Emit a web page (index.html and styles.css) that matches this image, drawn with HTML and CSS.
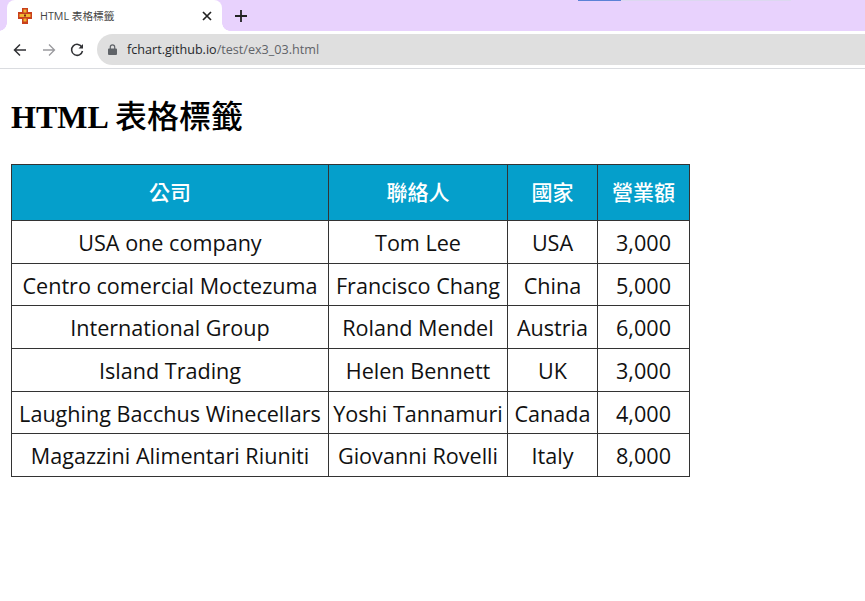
FILE: index.html
```html
<!DOCTYPE html>
<html lang="zh-Hant">
<head>
<meta charset="utf-8">
<title>HTML 表格標籤</title>
<link rel="stylesheet" href="styles.css">
</head>
<body>
<header class="chrome">
  <div class="tabstrip">
    <div class="tab">
      <svg class="favicon" width="14" height="16" viewBox="0 0 14 16"><path fill="#c9401c" d="M4 0h6v4h4v7h-4v5H4v-5H0V4h4z"/><path fill="#f2b632" d="M5.500 1.500h3v3h-3zM1.500 6h11v3h-11zM5.500 10.500h3v3h-3z"/><path fill="#7a2a10" d="M6 6.500h2v2H6z"/></svg>
      <span class="tab-title">HTML 表格標籤</span>
      <svg class="tab-close" width="10" height="10" viewBox="0 0 10 10"><path d="M1 1l8 8M9 1l-8 8" stroke="#222" stroke-width="1.700"/></svg>
    </div>
    <svg class="new-tab" width="12" height="12" viewBox="0 0 12 12"><path d="M6 0v12M0 6h12" stroke="#222" stroke-width="1.800"/></svg>
    <div class="sysbar"><span class="sysbar-blue"></span><span class="sysbar-light"></span></div>
  </div>
  <div class="toolbar">
    <svg class="nav" width="14" height="14" viewBox="0 0 14 14"><path d="M13 7H2M7 1.500L1.500 7 7 12.500" fill="none" stroke="#303134" stroke-width="1.500"/></svg>
    <svg class="nav" width="14" height="14" viewBox="0 0 14 14"><path d="M1 7h11M7 1.500L12.500 7 7 12.500" fill="none" stroke="#9a9a9e" stroke-width="1.300"/></svg>
    <svg class="nav nav-last" width="14" height="14" viewBox="0 0 14 14"><path d="M12 4.300A5.500 5.500 0 1 0 12.500 8" fill="none" stroke="#303134" stroke-width="1.500"/><path d="M13 1v4.500H8.500z" fill="#303134"/></svg>
    <div class="omnibox">
      <svg width="9" height="11" viewBox="0 0 9 11"><path fill="#5f6368" d="M1 4.500h7a1 1 0 0 1 1 1V10a1 1 0 0 1-1 1H1a1 1 0 0 1-1-1V5.500a1 1 0 0 1 1-1z"/><path fill="none" stroke="#5f6368" stroke-width="1.200" d="M2.300 5V3a2.200 2.200 0 0 1 4.400 0v2"/></svg>
      <span class="url"><span class="host">fchart.github.io</span>/test/ex3_03.html</span>
    </div>
  </div>
</header>
<main class="page">
  <h1>HTML <span class="h1-cjk">表格標籤</span></h1>
  <table class="sales">
    <colgroup><col class="c1"><col class="c2"><col class="c3"><col class="c4"></colgroup>
    <thead>
      <tr><th>公司</th><th>聯絡人</th><th>國家</th><th>營業額</th></tr>
    </thead>
    <tbody>
      <tr><td>USA one company</td><td>Tom Lee</td><td>USA</td><td>3,000</td></tr>
      <tr><td>Centro comercial Moctezuma</td><td>Francisco Chang</td><td>China</td><td>5,000</td></tr>
      <tr><td>International Group</td><td>Roland Mendel</td><td>Austria</td><td>6,000</td></tr>
      <tr><td>Island Trading</td><td>Helen Bennett</td><td>UK</td><td>3,000</td></tr>
      <tr><td>Laughing Bacchus Winecellars</td><td>Yoshi Tannamuri</td><td>Canada</td><td>4,000</td></tr>
      <tr><td>Magazzini Alimentari Riuniti</td><td>Giovanni Rovelli</td><td>Italy</td><td>8,000</td></tr>
    </tbody>
  </table>
</main>
</body>
</html>
```

FILE: styles.css
```css
html, body {
  margin: 0;
  padding: 0;
  background: #fff;
  overflow: hidden;
}
body {
  width: 865px;
  height: 601px;
  font-family: "Open Sans", "Noto Sans CJK TC", sans-serif;
}
.chrome {
  display: flex;
  flex-direction: column;
}
.tabstrip {
  position: relative;
  height: 31px;
  background: #e8d2fd;
  display: flex;
  align-items: center;
  padding-left: 7px;
  box-sizing: border-box;
}
.tab {
  position: relative;
  width: 215px;
  height: 31px;
  box-sizing: border-box;
  background: #fff;
  border-radius: 8px 8px 0 0;
  display: flex;
  align-items: center;
  padding: 0 10px 0 11px;
}
.tab::before, .tab::after {
  content: "";
  position: absolute;
  bottom: 0;
  width: 8px;
  height: 8px;
}
.tab::before {
  left: -8px;
  background: radial-gradient(circle at 0 0, #e8d2fd 7.500px, #fff 8px);
}
.tab::after {
  right: -8px;
  background: radial-gradient(circle at 100% 0, #e8d2fd 7.500px, #fff 8px);
}
.favicon { flex: none; }
.tab-title {
  flex: 1;
  margin-left: 8px;
  font-size: 10.700px;
  color: #444;
}
.new-tab { margin-left: 13px; }
.sysbar {
  position: absolute;
  top: 0;
  left: 578px;
  display: flex;
  height: 1px;
}
.sysbar-blue { width: 43px; background: #5b82d6; }
.sysbar-light { width: 170px; background: #dcd8f0; }
.toolbar {
  height: 38px;
  box-sizing: border-box;
  padding: 3px 0 3px 13px;
  border-bottom: 1px solid #dadce0;
  display: flex;
  align-items: center;
  background: #fff;
}
.nav { flex: none; margin-right: 14.500px; }
.nav-last { margin-right: 13px; }
.omnibox {
  flex: 1;
  height: 31px;
  background: #dfdfdf;
  border-radius: 16px 0 0 16px;
  display: flex;
  align-items: center;
  padding-left: 11px;
  gap: 10px;
}
.url {
  font-size: 12.600px;
  color: #5f6368;
}
.host { color: #26282b; }
.page {
  padding: 0 11px;
}
h1 {
  margin: 27px 0 28px;
  font-family: "Liberation Serif", "Noto Sans CJK TC", serif;
  font-size: 32px;
  line-height: 37px;
  font-weight: bold;
  color: #000;
}
.h1-cjk {
  font-family: "Noto Sans CJK TC", sans-serif;
  font-weight: 500;
}
.sales {
  border-collapse: collapse;
  table-layout: fixed;
  width: 678px;
  border: 1px solid #333;
}
.c1 { width: 317px; }
.c2 { width: 179px; }
.c3 { width: 90px; }
.c4 { width: 92px; }
.sales th, .sales td {
  border: 1px solid #333;
  text-align: center;
  white-space: nowrap;
  color: #111;
}
.sales th {
  height: 52px;
  padding: 0 0 3px;
  background: #059fcb;
  color: #fff;
  font-size: 21px;
  font-weight: 500;
}
.sales td {
  height: 40.700px;
  padding: 1px 0 0;
  font-size: 21.600px;
}
```
